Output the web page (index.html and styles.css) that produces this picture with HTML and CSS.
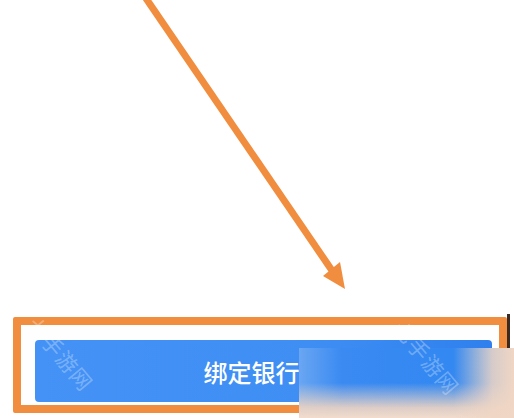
FILE: index.html
```html
<!DOCTYPE html>
<html lang="zh-CN">
<head>
  <meta charset="UTF-8">
  <meta name="viewport" content="width=device-width, initial-scale=1">
  <title>绑定银行卡</title>
  <link rel="stylesheet" href="styles.css">
</head>
<body>

  <div class="screen">
    <div class="frame">
      <button class="bind-btn">绑定银行卡</button>
    </div>
    <div class="edge-line"></div>

    <!-- blurred patch over the right part of the button -->
    <div class="blur-patch"></div>

    <!-- arrow annotation -->
    <svg class="arrow" width="514" height="418" viewBox="0 0 514 418">
      <line x1="143" y1="-6" x2="333" y2="272" stroke="#f18d3e" stroke-width="7"/>
      <polygon points="345,289 323,276 340,262" fill="#f18d3e"/>
    </svg>

    <div class="watermark wm-left">七手游网</div>
    <div class="watermark wm-right">七手游网</div>
  </div>

</body>
</html>
```

FILE: styles.css
```css
body {
  margin: 0;
  background: #ffffff;
  font-family: "Noto Sans CJK SC", "Noto Sans", sans-serif;
  overflow: hidden;
}

.screen {
  position: relative;
  width: 514px;
  height: 418px;
  display: flex;
  flex-direction: column;
  justify-content: flex-end;
  overflow: hidden;
}

.frame {
  width: 494px;
  box-sizing: border-box;
  margin: 0 0 5px 13px;
  border: 8px solid #f18d3e;
  border-radius: 2px;
  padding: 15px 7px 3px 14px;
  background: #fefefe;
}

.bind-btn {
  display: block;
  width: 100%;
  height: 62px;
  border: none;
  border-radius: 4px;
  background: linear-gradient(to right, #4492f6, #3f8ef4 60%, #2f80ee);
  color: #ffffff;
  font-family: "Noto Sans CJK SC", sans-serif;
  font-size: 24px;
  font-weight: 500;
  padding: 0;
}

.edge-line {
  position: absolute;
  left: 507px;
  top: 314px;
  width: 3px;
  height: 40px;
  background: #3a2a22;
}

.blur-patch {
  position: absolute;
  left: 299px;
  top: 348px;
  right: 0;
  bottom: 0;
  background:
    linear-gradient(to right, rgba(240, 214, 196, 0) 72%, rgba(240, 214, 196, 0.85) 90%, #f0d6c4 100%),
    linear-gradient(to bottom, rgba(238, 212, 194, 0) 50%, rgba(238, 212, 194, 0.9) 85%, #f2dccd 100%),
    linear-gradient(to right, #6aa6f2, #3a8af2 20%, #3388f1 70%, #4a92ee);
}

.arrow {
  position: absolute;
  left: 0;
  top: 0;
}

.watermark {
  position: absolute;
  color: rgba(255, 255, 255, 0.3);
  font-size: 21px;
  letter-spacing: 1px;
  transform: rotate(50deg);
  transform-origin: left top;
  white-space: nowrap;
}

.wm-left {
  left: 44px;
  top: 310px;
}

.wm-right {
  left: 410px;
  top: 314px;
}
```
